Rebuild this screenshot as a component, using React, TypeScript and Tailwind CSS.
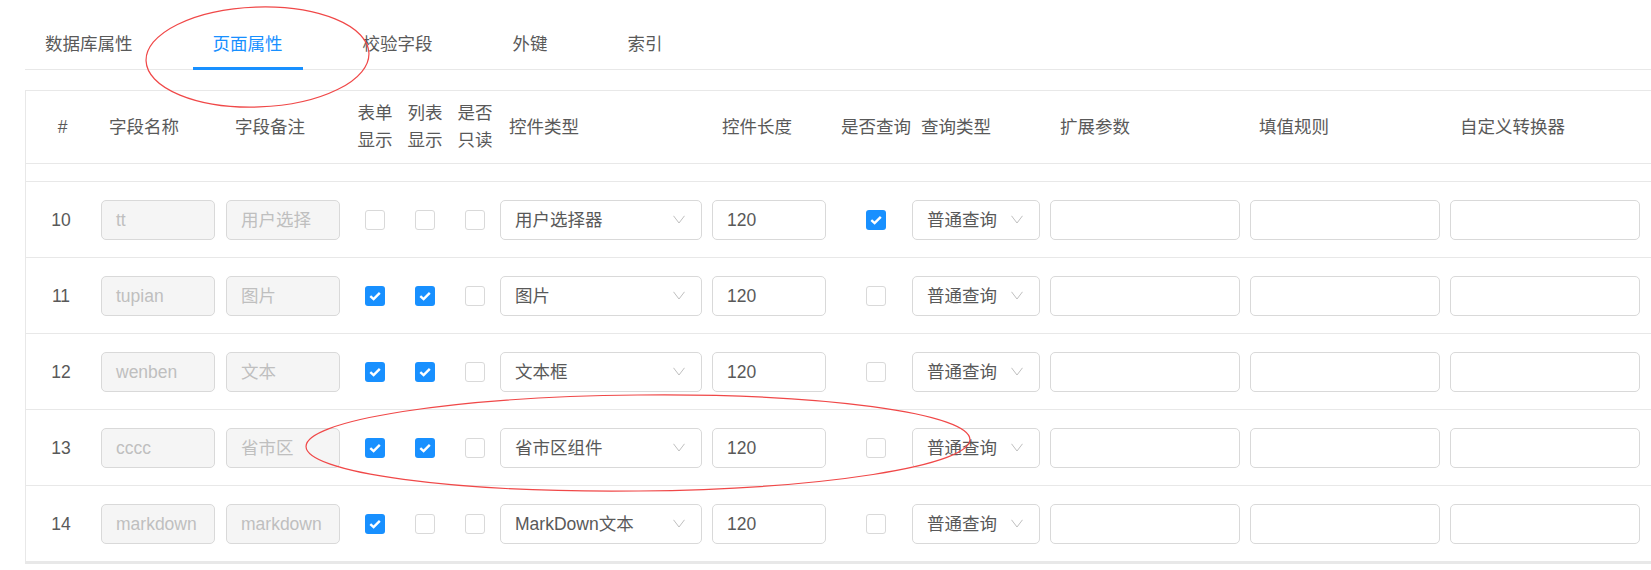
import React from 'react';

type Row = {
  no: number;
  name: string;
  remark: string;
  form: boolean;
  list: boolean;
  readonly: boolean;
  widget: string;
  length: string;
  query: boolean;
  queryType: string;
};

const rows: Row[] = [
  { no: 10, name: 'tt', remark: '用户选择', form: false, list: false, readonly: false, widget: '用户选择器', length: '120', query: true, queryType: '普通查询' },
  { no: 11, name: 'tupian', remark: '图片', form: true, list: true, readonly: false, widget: '图片', length: '120', query: false, queryType: '普通查询' },
  { no: 12, name: 'wenben', remark: '文本', form: true, list: true, readonly: false, widget: '文本框', length: '120', query: false, queryType: '普通查询' },
  { no: 13, name: 'cccc', remark: '省市区', form: true, list: true, readonly: false, widget: '省市区组件', length: '120', query: false, queryType: '普通查询' },
  { no: 14, name: 'markdown', remark: 'markdown', form: true, list: false, readonly: false, widget: 'MarkDown文本', length: '120', query: false, queryType: '普通查询' },
];

const tabs = ['数据库属性', '页面属性', '校验字段', '外键', '索引'];

// shared column template for header and rows
const cols =
  'grid grid-cols-[75px_125px_124px_50px_50px_50px_212px_128px_72px_138px_200px_200px_200px_1fr]';

const Checkbox = ({ on }: { on: boolean }) =>
  on ? (
    <span className="flex h-[20px] w-[20px] items-center justify-center rounded-[3px] bg-[#1890ff]">
      <svg width="12" height="10" viewBox="0 0 12 10">
        <path d="M1.3 5.2 L4.6 8.2 L10.8 1.8" fill="none" stroke="#fff" strokeWidth="2.4" />
      </svg>
    </span>
  ) : (
    <span className="h-[20px] w-[20px] rounded-[3px] border border-[#d9d9d9] bg-white" />
  );

const Chevron = () => (
  <svg width="12" height="9" viewBox="0 0 12 9">
    <path d="M0.5 0.8 L6 8 L11.5 0.8" fill="none" stroke="#bfbfbf" strokeWidth="1" />
  </svg>
);

const Input = ({ value, width, disabled }: { value?: string; width: string; disabled?: boolean }) => (
  <div
    className={`flex h-[40px] items-center rounded-[5px] border border-[#d9d9d9] pl-[14px] ${width} ${
      disabled ? 'bg-[#f5f5f5] text-[#bfbfbf]' : 'bg-white text-[#595959]'
    }`}
  >
    {value}
  </div>
);

const Select = ({ value, width }: { value: string; width: string }) => (
  <div
    className={`flex h-[40px] items-center justify-between rounded-[5px] border border-[#d9d9d9] bg-white pl-[14px] pr-[16px] text-[#595959] ${width}`}
  >
    <span className="whitespace-nowrap">{value}</span>
    <Chevron />
  </div>
);

const Center = ({ children }: { children: React.ReactNode }) => (
  <div className="flex items-center justify-center">{children}</div>
);

const App = () => {
  return (
    <div className="relative h-[570px] w-[1651px] overflow-hidden bg-white pl-[25px] font-['Liberation_Sans','Noto_Sans_CJK_SC',sans-serif] text-[17.5px] leading-[26px] text-[#595959]">
      {/* Tabs */}
      <div className="flex w-[1700px] border-b border-[#e8e8e8]">
        {tabs.map((t, i) => (
          <div
            key={t}
            className={`relative mr-[40px] px-[20px] pb-[12px] pt-[31px] whitespace-nowrap ${
              i === 1 ? 'text-[#1890ff]' : 'text-[#595959]'
            }`}
          >
            {t}
            {i === 1 && <span className="absolute bottom-[-1px] left-0 h-[3px] w-full bg-[#1890ff]" />}
          </div>
        ))}
      </div>

      {/* Table card */}
      <div className="mt-[20px] w-[1700px] border-l border-t border-b-2 border-[#e8e8e8]">
        {/* Header */}
        <div className={`${cols} h-[73px] border-b border-[#e8e8e8] items-center`}>
          <div className="pr-[2px] text-center">#</div>
          <div className="pl-[8px]">字段名称</div>
          <div className="pl-[9px]">字段备注</div>
          <div className="text-center leading-[27px]">
            表单
            <br />
            显示
          </div>
          <div className="text-center leading-[27px]">
            列表
            <br />
            显示
          </div>
          <div className="text-center leading-[27px]">
            是否
            <br />
            只读
          </div>
          <div className="pl-[9px]">控件类型</div>
          <div className="pl-[10px]">控件长度</div>
          <div className="whitespace-nowrap text-center">是否查询</div>
          <div className="pl-[9px]">查询类型</div>
          <div className="pl-[10px]">扩展参数</div>
          <div className="pl-[9px]">填值规则</div>
          <div className="pl-[10px]">自定义转换器</div>
          <div />
        </div>

        {/* scrolled-out spacer */}
        <div className="h-[18px] border-b border-[#e8e8e8]" />

        {rows.map((r) => (
          <div key={r.no} className={`${cols} h-[76px] border-b border-[#e8e8e8] items-center`}>
            <div className="pr-[5px] text-center">{r.no}</div>
            <Input value={r.name} width="w-[114px]" disabled />
            <Input value={r.remark} width="w-[114px]" disabled />
            <Center>
              <Checkbox on={r.form} />
            </Center>
            <Center>
              <Checkbox on={r.list} />
            </Center>
            <Center>
              <Checkbox on={r.readonly} />
            </Center>
            <Select value={r.widget} width="w-[202px]" />
            <Input value={r.length} width="w-[114px]" />
            <Center>
              <Checkbox on={r.query} />
            </Center>
            <Select value={r.queryType} width="w-[128px]" />
            <Input width="w-[190px]" />
            <Input width="w-[190px]" />
            <Input width="w-[190px]" />
            <div />
          </div>
        ))}
      </div>

      {/* red hand-drawn annotations */}
      <svg className="pointer-events-none absolute left-0 top-0" width="1651" height="570">
        <ellipse cx="257.5" cy="57" rx="111.5" ry="50" fill="none" stroke="#f04848" strokeWidth="1.2" transform="rotate(-2 257.5 57)" />
        <ellipse cx="638" cy="443" rx="332" ry="48" fill="none" stroke="#f04848" strokeWidth="1.2" transform="rotate(-0.6 638 443)" />
      </svg>
    </div>
  );
};

export default App;
